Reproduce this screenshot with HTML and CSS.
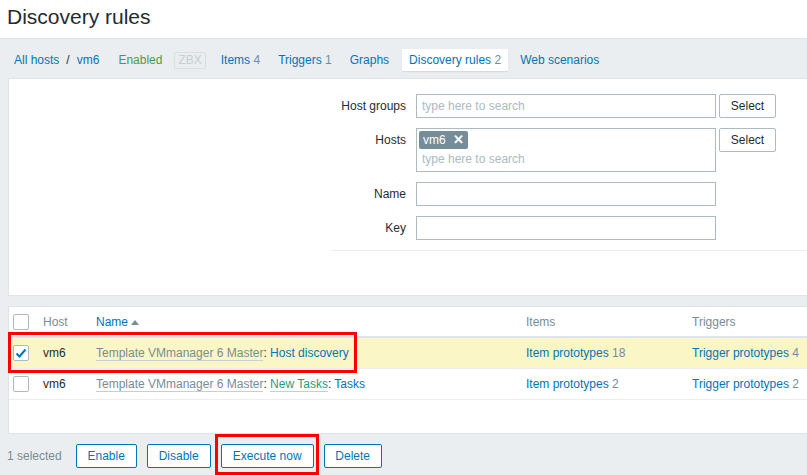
FILE: index.html
```html
<!DOCTYPE html>
<html lang="en">
<head>
    <meta charset="UTF-8">
    <title>Discovery rules</title>
    <link rel="stylesheet" href="styles.css">
</head>
<body>
    <header class="page-header">
        <h1>Discovery rules</h1>
    </header>

    <main class="wrapper">
        <nav class="host-nav">
            <div class="breadcrumbs">
                <a href="#">All hosts</a>
                <span class="sep">/</span>
                <a href="#">vm6</a>
            </div>
            <span class="status-on">Enabled</span>
            <span class="badge-zbx">ZBX</span>
            <a href="#">Items <sup>4</sup></a>
            <a href="#">Triggers <sup>1</sup></a>
            <a href="#">Graphs</a>
            <a href="#" class="tab-active">Discovery rules <sup>2</sup></a>
            <a href="#">Web scenarios</a>
        </nav>

        <section class="filter">
            <div class="filter-form">
                <label>Host groups</label>
                <div class="input placeholder">type here to search</div>
                <button class="btn-alt">Select</button>

                <label>Hosts</label>
                <div class="input multiselect">
                    <span class="tag">vm6 <span class="tag-x">&#x2715;</span></span>
                    <span class="placeholder">type here to search</span>
                </div>
                <button class="btn-alt">Select</button>

                <label>Name</label>
                <div class="input"></div>
                <span></span>

                <label>Key</label>
                <div class="input"></div>
                <span></span>
            </div>
            <div class="filter-sep"></div>
        </section>

        <section class="list">
            <table>
                <colgroup>
                    <col class="col-check">
                    <col class="col-host">
                    <col class="col-name">
                    <col class="col-items">
                    <col>
                </colgroup>
                <thead>
                    <tr>
                        <th><span class="checkbox"></span></th>
                        <th>Host</th>
                        <th><a href="#">Name</a> <span class="arrow-up"></span></th>
                        <th>Items</th>
                        <th>Triggers</th>
                    </tr>
                </thead>
                <tbody>
                    <tr class="row-selected">
                        <td><span class="checkbox checked"><svg width="14" height="14" viewBox="0 0 14 14"><path d="M2.5 7.5 L5.5 10.5 L11.5 3.5" fill="none" stroke="#0275b8" stroke-width="2"/></svg></span></td>
                        <td>vm6</td>
                        <td><a href="#" class="link-grey">Template VMmanager 6 Master</a>: <a href="#">Host discovery</a></td>
                        <td><a href="#">Item prototypes</a> <sup>18</sup></td>
                        <td><a href="#">Trigger prototypes</a> <sup>4</sup></td>
                    </tr>
                    <tr>
                        <td><span class="checkbox"></span></td>
                        <td>vm6</td>
                        <td><a href="#" class="link-grey">Template VMmanager 6 Master</a>: <a href="#" class="link-teal">New Tasks</a>: <a href="#">Tasks</a></td>
                        <td><a href="#">Item prototypes</a> <sup>2</sup></td>
                        <td><a href="#">Trigger prototypes</a> <sup>2</sup></td>
                    </tr>
                </tbody>
            </table>
            <div class="highlight hl-row"></div>
        </section>

        <div class="actions">
            <span class="selected-count">1 selected</span>
            <button class="btn-alt btn-enable">Enable</button>
            <button class="btn-alt btn-disable">Disable</button>
            <span class="hl-wrap">
                <button class="btn-alt btn-execute">Execute now</button>
                <span class="highlight hl-btn"></span>
            </span>
            <button class="btn-alt btn-delete">Delete</button>
        </div>
    </main>
</body>
</html>
```

FILE: styles.css
```css
body {
    margin: 0;
    background: #ebeef0;
    color: #1f2c33;
    font-family: "Liberation Sans", Arial, sans-serif;
    font-size: 12px;
    overflow: hidden;
    width: 807px;
    height: 475px;
}
a {
    color: #0275b8;
    text-decoration: none;
}
sup {
    vertical-align: baseline;
    color: #768d99;
    font-size: 12px;
}
.page-header {
    background: #fff;
    height: 38px;
    border-bottom: 1px solid #dfe4e7;
}
h1 {
    margin: 0;
    padding: 5px 0 0 7px;
    font-size: 21px;
    font-weight: normal;
    line-height: 24px;
    color: #1f2c33;
}
.wrapper {
    width: 900px;
}
.host-nav {
    display: flex;
    align-items: center;
    gap: 18px;
    height: 22px;
    margin: 10px 0 0 14px;
}
.breadcrumbs {
    display: flex;
    gap: 7px;
}
.breadcrumbs .sep {
    color: #1f2c33;
}
.status-on {
    color: #429e47;
    margin-left: 1px;
}
.badge-zbx {
    border: 1px solid #d8dee2;
    color: #c5cfd4;
    padding: 1px 3px;
    line-height: 13px;
    margin-left: -6px;
    border-radius: 2px;
}
.badge-zbx + a {
    margin-left: -3px;
}
.tab-active {
    background: #fff;
    height: 22px;
    line-height: 22px;
    padding: 0 7px;
    margin: 0 -6px 0 -5px;
    box-shadow: 0 1px 1px rgba(0, 0, 0, 0.08);
}
.filter {
    background: #fff;
    border: 1px solid #dfe4e7;
    margin: 7px 0 0 8px;
    height: 216px;
}
.filter-form {
    display: grid;
    grid-template-columns: 397px 300px 57px;
    grid-template-rows: 24px 44px 24px 24px;
    column-gap: 10px;
    row-gap: 10px;
    padding-top: 15px;
}
.filter-form .btn-alt {
    justify-self: start;
    width: 57px;
    padding: 0;
    margin-left: -7px;
    color: #1f2c33;
    border-color: #acbbc2;
    height: 24px;
}
.filter-form label {
    text-align: right;
    line-height: 24px;
}
.input {
    border: 1px solid #acbbc2;
    box-sizing: border-box;
    padding: 0 5px;
    line-height: 22px;
}
.placeholder {
    color: #acbbc2;
}
.multiselect {
    display: flex;
    flex-direction: column;
    align-items: flex-start;
    padding: 2px 0 0 2px;
    line-height: 18px;
}
.multiselect .placeholder {
    padding: 0 3px;
    margin-top: 1px;
}
.tag {
    display: flex;
    align-items: center;
    background: #768d99;
    color: #fff;
    height: 18px;
    padding: 0 4px;
    border-radius: 2px;
    line-height: 18px;
}
.tag-x {
    font-weight: bold;
    font-size: 13px;
    margin-left: 7px;
}
.filter-sep {
    border-top: 1px solid #ebeef0;
    margin: 10px 0 0 322px;
}
.list {
    position: relative;
    background: #fff;
    border: 1px solid #dfe4e7;
    margin: 10px 0 0 8px;
    height: 126px;
}
table {
    border-collapse: collapse;
    table-layout: fixed;
    width: 891px;
}
.col-check { width: 29px; }
.col-host { width: 53px; }
.col-name { width: 430px; }
.col-items { width: 166px; }
th {
    text-align: left;
    font-weight: normal;
    color: #768d99;
    height: 29px;
    padding: 0 5px;
    border-bottom: 2px solid #dfe4e7;
}
td {
    height: 30px;
    padding: 0 5px;
    border-bottom: 1px solid #ebeef0;
    white-space: nowrap;
}
th:first-child,
td:first-child {
    padding: 0 0 0 4px;
}
.row-selected td {
    background: #fbf6c5;
}
.checkbox {
    display: block;
    width: 16px;
    height: 16px;
    box-sizing: border-box;
    border: 1px solid #acbbc2;
    background: #fff;
    border-radius: 2px;
    position: relative;
}
.checkbox svg {
    position: absolute;
    left: 0;
    top: 0;
}
.arrow-up {
    display: inline-block;
    width: 0;
    height: 0;
    border-left: 4px solid transparent;
    border-right: 4px solid transparent;
    border-bottom: 5px solid #768d99;
    vertical-align: 1px;
}
.link-grey {
    color: #768d99;
    border-bottom: 1px solid #c5cfd4;
}
.link-teal {
    color: #1f9d85;
    border-bottom: 1px solid #c5cfd4;
}
.highlight {
    position: absolute;
    border: 3px solid #f00;
    box-sizing: border-box;
    pointer-events: none;
}
.hl-row {
    left: -1px;
    top: 25px;
    width: 349px;
    height: 41px;
}
.actions {
    display: flex;
    align-items: center;
    gap: 10px;
    margin: 10px 0 0 7px;
    height: 24px;
}
.selected-count {
    color: #768d99;
    margin-right: 4px;
}
.btn-alt {
    font-family: inherit;
    font-size: 12px;
    background: #fff;
    color: #0275b8;
    border: 1px solid #0275b8;
    border-radius: 2px;
    height: 24px;
    padding: 0;
    cursor: pointer;
}
.btn-enable { width: 61px; }
.btn-disable { width: 64px; }
.btn-execute { width: 93px; }
.btn-delete { width: 58px; }
.hl-wrap {
    position: relative;
    display: flex;
}
.hl-btn {
    left: -6px;
    top: -10px;
    width: 104px;
    height: 41px;
}
```
